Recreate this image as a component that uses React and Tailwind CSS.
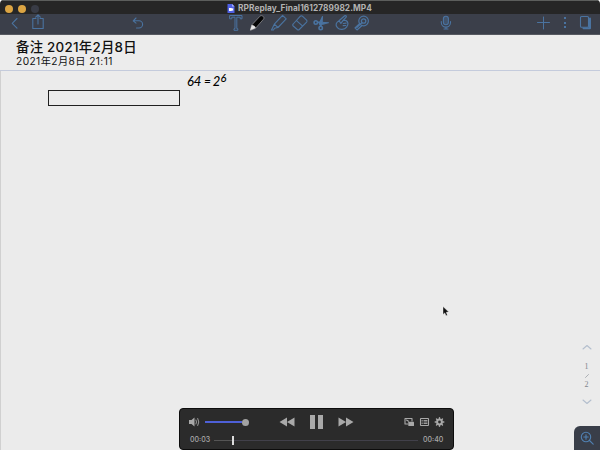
import React from 'react';

const stroke = { fill: 'none', stroke: 'currentColor', strokeWidth: 1.1, strokeLinecap: 'round', strokeLinejoin: 'round' };

function Icon({ className, w, h, children }) {
  return (
    <svg className={`block shrink-0 ${className || ''}`} width={w} height={h} viewBox={`0 0 ${w} ${h}`} {...stroke}>
      {children}
    </svg>
  );
}

function TitleBar() {
  return (
    <div className="flex h-[14px] shrink-0 items-start border-t border-[#5c5e5c] bg-[#262626]">
      <div className="flex w-[227px] gap-[5px] pl-[5px] pt-1">
        <span className="size-2 rounded-full bg-[#dca543]" />
        <span className="size-2 rounded-full bg-[#dca543]" />
        <span className="size-2 rounded-full bg-[#393c46]" />
      </div>
      <Icon w={8} h={11} className="mt-[2px]">
        <path d="M.5 1h4.7l2.3 2.2V10h-7z" fill="#4f60e4" stroke="none" />
        <path d="M5 1v2.5h2.5z" fill="#a7b2f7" stroke="none" />
        <path d="M2 5h2.8v.8l1.4-.8v3l-1.4-.8V8H2z" fill="#fff" stroke="none" />
      </Icon>
      <h1 className="ml-[3px] mt-[2px] whitespace-nowrap text-[8.3px] font-bold leading-[11px] tracking-[0.07px] text-[#b2b2b2]">
        RPReplay_Final1612789982.MP4
      </h1>
    </div>
  );
}

function Toolbar() {
  return (
    <div className="flex h-[21px] shrink-0 items-start border-b border-[#565961] bg-[#3b3f4a] text-[#4a73a0]">
      <Icon w={8} h={18} className="ml-[11px]"><path d="M6 4.5L1.2 9.3 6 14.1" /></Icon>
      <Icon w={14} h={18} className="ml-[12px]">
        <path d="M5 4.5H1.8v10h10.4v-10H9M7 10V1M4.7 3.2L7 .9l2.3 2.3" />
      </Icon>
      <Icon w={14} h={18} className="ml-[86px]">
        <path d="M5 4L2.2 6.8 5 9.2M2.5 6.8H8a3.6 3.6 0 0 1 0 7.2H5.5" />
      </Icon>
      <Icon w={16} h={18} className="ml-[83px]">
        <path d="M2 1.5h12v3.3h-1.8V3.2H8.8v11.5h1v1.6H6v-1.6h1V3.2H3.8v1.6H2z" strokeWidth="1" />
      </Icon>
      <Icon w={18} h={18} className="ml-[4px]">
        <path d="M2.5 16l1.2-5L12 2.2c1.5-1.8 5.2.8 3.5 3L7.8 14z" fill="#050505" stroke="#8b8c8f" strokeWidth=".8" />
        <path d="M2.2 16.2l1.5-5.2c1.8 0 3.4 1.3 4.2 3z" fill="#e5e5e5" stroke="none" />
      </Icon>
      <Icon w={18} h={18} className="ml-[4px]">
        <path d="M1.5 16L4.3 10.2 12.6 1.4l3.6 3.4L8 13.5l-3.5.8-1 1.7zM4.3 10.2L8 13.5" />
      </Icon>
      <Icon w={18} h={18} className="ml-[3px]">
        <path d="M2.2 10L9.4 2.2q1-.8 2 0l4.2 4q.9 1 0 2L8.3 15.5q-1 .8-2 0L2.2 12q-1-1 0-2zM5.5 6.6l6.2 5.6" />
      </Icon>
      <Icon w={18} h={18} className="ml-[3px]">
        <circle cx="3.8" cy="8.5" r="1.7" strokeWidth="1.6" />
        <circle cx="8.7" cy="14" r="1.7" strokeWidth="1.6" />
        <path d="M5.5 8l11 .8-5.7 1.4zM8.8 12.3L7.2 9.5l3.3-7-.5 7z" fill="currentColor" />
      </Icon>
      <Icon w={18} h={18} className="ml-[3px]">
        <path d="M6 6.8l5.7-5c1.2-.8 2.2.5 1.3 1.5L10.3 6.2l2.8.4c2.2 1 2.5 4.3.5 6.6-2 2.7-7 3-9.2.5C2 11 3 8.6 6 6.8zM6.1 6.9l1.8 2.4 2.4-3.1M10.3 9.5l2.8-.4M10.2 11.7l2.6-.2" strokeWidth="1.2" />
      </Icon>
      <Icon w={18} h={18} className="ml-[2px]">
        <circle cx="10.6" cy="7" r="4.8" strokeWidth="1.2" />
        <circle cx="10.6" cy="7" r="2.2" strokeWidth="1.3" />
        <path d="M6.8 9.6L2 13.9l2 2 5-4.4M8.8 8.8l-5 4.6" strokeWidth="1.3" />
      </Icon>
      <Icon w={12} h={18} className="ml-[69px]">
        <rect x="3.4" y="2.2" width="5" height="8.6" rx="2.5" fill="#41536b" />
        <path d="M1.3 7.5v1a4.6 4.6 0 0 0 9.2 0v-1M6 13v2M4 15h4" />
      </Icon>
      <Icon w={14} h={18} className="ml-[85px]"><path d="M6.5 3v12M.5 8.5h12" strokeWidth="1" /></Icon>
      <Icon w={4} h={18} className="ml-[12px]">
        <g fill="currentColor" stroke="none"><rect x="1" y="3" width="2" height="2" /><rect x="1" y="8" width="2" height="2" /><rect x="1" y="12" width="2" height="2" /></g>
      </Icon>
      <Icon w={14} h={18} className="ml-[12px]">
        <path d="M4.5 14.3h6.5V4.5" strokeWidth="2" />
        <rect x="1.5" y="2.5" width="8" height="10.8" rx="1" fill="#3b3f4a" />
      </Icon>
    </div>
  );
}

function Player() {
  return (
    <section className="absolute left-[179px] top-[408px] flex h-[42px] w-[275px] flex-col rounded-[4px] border border-[#0c0c0c] bg-[#2b2b2b] text-[#a9a9a9]">
      <div className="flex h-[26px] items-center">
        <Icon w={13} h={12} className="ml-[8px]">
          <path d="M1 4h2.5L6.5 1.5v9L3.5 8H1z" fill="currentColor" stroke="none" />
          <path d="M8 4q1.2 2 0 4M9.8 2.5q2.2 3.5 0 7" strokeWidth=".9" />
        </Icon>
        <div className="ml-[4px] flex w-[44px] items-center">
          <div className="h-[2px] grow bg-[#4e60d8]" />
          <div className="size-[7px] rounded-full bg-[#a3a3a3]" />
        </div>
        <Icon w={16} h={10} className="ml-[30px]"><path d="M8 .5v9L.5 5zM15.5.5v9L8 5z" fill="currentColor" stroke="none" /></Icon>
        <div className="ml-[15px] flex gap-[3px]">
          <span className="h-[14px] w-[5px] bg-[#a9a9a9]" />
          <span className="h-[14px] w-[5px] bg-[#a9a9a9]" />
        </div>
        <Icon w={16} h={10} className="ml-[15px]"><path d="M.5.5v9L8 5zM8 .5v9L15.5 5z" fill="currentColor" stroke="none" /></Icon>
        <Icon w={11} h={10} className="ml-[50px]">
          <path d="M4 7H1V1.5h7V4" />
          <rect x="4.3" y="4.8" width="5.7" height="4.2" rx=".5" fill="currentColor" stroke="none" />
          <path d="M2.5 3l2 1.2" />
        </Icon>
        <Icon w={11} h={10} className="ml-[4px]">
          <rect x="1.5" y="1.5" width="8" height="7" rx=".5" />
          <path d="M3 3.5h.3M5 3.5h3M3 5h.3M5 5h3M3 6.5h.3M5 6.5h3" strokeWidth=".9" />
        </Icon>
        <Icon w={11} h={10} className="ml-[4px]">
          <circle cx="5.5" cy="5" r="2.4" strokeWidth="2" />
          <path d="M5.5.7v1M5.5 8.3v1M1.2 5h1M8.8 5h1M2.5 2l.7.7M7.8 7.3l.7.7M8.5 2l-.7.7M3.2 7.3l-.7.7" strokeWidth="1.4" />
        </Icon>
      </div>
      <div className="flex h-[10px] items-center font-[Inter,sans-serif] text-[7px] font-medium leading-[10px]">
        <span className="ml-[10px] w-[24px]">00:03</span>
        <span className="h-px w-[18px] bg-[#555]" />
        <span className="h-[9px] w-[2px] bg-[#dcdcdc]" />
        <span className="h-px w-[184px] bg-[#41404a]" />
        <span className="ml-[5px]">00:40</span>
      </div>
    </section>
  );
}

export default function App() {
  return (
    <main className="relative flex h-[450px] w-[600px] flex-col overflow-hidden rounded-t-[4px] bg-[#ebebeb] font-[Inter,'Noto_Sans_CJK_SC',sans-serif]">
      <TitleBar />
      <Toolbar />
      <header className="h-[36px] shrink-0 border-b border-[#c4cbdc] bg-[#ececec] pl-4 pt-[4px] text-[#111]">
        <h2 className="whitespace-nowrap text-[13.4px] font-medium leading-[16px] tracking-[0.25px]">备注 2021年2月8日</h2>
        <p className="whitespace-nowrap text-[10.2px] leading-[13px] tracking-[0.42px]">2021年2月8日 21:11</p>
      </header>
      <div className="flex grow border-l border-[#d0d0d0]">
        <div className="ml-[47px] mt-[19px] h-[16px] w-[132px] border border-[#202020]" />
        <div className="ml-[7px] mt-[2px] flex h-4 items-start font-[Lato,sans-serif] text-[13px] font-medium italic leading-4 text-black">
          <span className="tracking-[-0.3px]">64</span>
          <span className="ml-[3px] text-[12px]">=</span>
          <span className="ml-[2px] text-[13px]">2</span>
          <sup className="top-0 -mt-[3px] text-[11px] leading-4">6</sup>
        </div>
        <nav className="ml-auto mt-[273px] flex w-[27px] flex-col items-center font-[Liberation_Serif,serif] text-[8px] leading-[9px] text-[#81868e]">
          <Icon w={10} h={6} className="text-[#b4bfce]"><path d="M1 5l4-3.5L9 5" /></Icon>
          <span className="mt-[12px]">1</span>
          <Icon w={8} h={9}><path d="M2.5 6.5l3-3" strokeWidth=".6" /></Icon>
          <span>2</span>
          <Icon w={10} h={6} className="mt-[10px] text-[#b4bfce]"><path d="M1 1l4 3.5L9 1" /></Icon>
        </nav>
      </div>
      <svg className="absolute left-[442px] top-[306px]" width="8" height="11" viewBox="0 0 8 11">
        <path d="M1 .5v8l1.8-1.6L4 9.8l1.4-.6L4.3 6.3l2.5-.2z" fill="#111" stroke="#fff" strokeWidth=".4" />
      </svg>
      <Player />
      <button className="absolute bottom-0 right-0 flex h-[24px] w-[26px] items-center justify-center rounded-tl-[6px] bg-[#393e49] text-[#5080b2]">
        <Icon w={14} h={14}><circle cx="6" cy="6" r="4.7" /><path d="M9.5 9.5l3.7 3.7M6 3.8v4.4M3.8 6h4.4" /></Icon>
      </button>
    </main>
  );
}
